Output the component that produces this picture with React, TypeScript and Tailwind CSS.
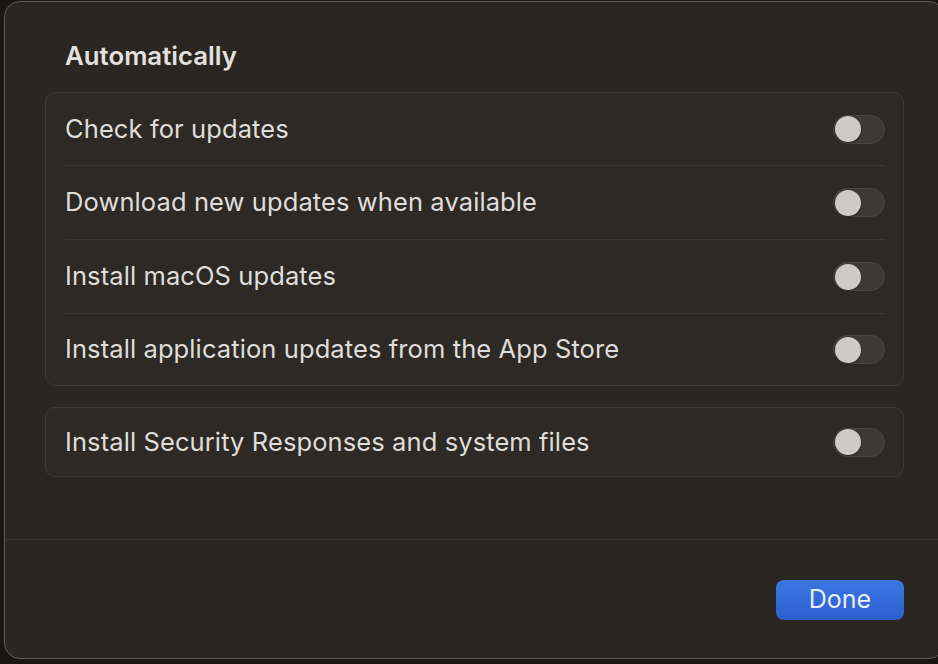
import React from 'react';

const font = { fontFamily: 'Inter, "Noto Sans", sans-serif' };

const Toggle: React.FC = () => (
  <div className="flex h-[29px] w-[52px] shrink-0 items-center rounded-full border border-[#4b4844] bg-[#3d3a36] pl-px">
    <div className="h-[26px] w-[26px] rounded-full bg-[#cccbc9] shadow-[0_1px_2px_rgba(0,0,0,0.4)]" />
  </div>
);

const heights = ['h-[73px]', 'h-[74px]', 'h-[74px]', 'h-[71px]'];

const Row: React.FC<{ label: string; divider?: boolean; h: string }> = ({ label, divider, h }) => (
  <div className="pl-[19px] pr-[18px]">
    <div className={`flex items-center justify-between ${h} ${divider ? 'border-b border-[#3a3732]' : ''}`}>
      <span className="text-[25.5px] tracking-[0.1px] text-[#dfddda]">{label}</span>
      <Toggle />
    </div>
  </div>
);

export default function App() {
  const rows = [
    'Check for updates',
    'Download new updates when available',
    'Install macOS updates',
    'Install application updates from the App Store',
  ];

  return (
    <div className="h-[664px] w-[938px] overflow-hidden bg-[#1a1613]" style={font}>
      <div className="ml-[4px] mt-px flex h-[658px] w-[941px] flex-col rounded-[16px] border border-[#5e5b57] bg-[#2a2621]">
        <div className="flex-1 px-10 pt-[38px]">
          <h2 className="h-8 pl-5 text-[25.8px] font-semibold leading-8 text-[#e3e1de]">Automatically</h2>
          <div className="mt-[20px] rounded-[10px] border border-[#3d3a35] bg-[#2d2a25]">
            {rows.map((r, i) => (
              <Row key={r} label={r} divider={i < rows.length - 1} h={heights[i]} />
            ))}
          </div>
          <div className="mt-[21px] rounded-[10px] border border-[#3d3a35] bg-[#2d2a25]">
            <div className="pl-[19px] pr-[18px]">
              <div className="flex h-[68px] items-center justify-between">
                <span className="text-[25.5px] tracking-[0.1px] text-[#dfddda]">
                  Install Security Responses and system files
                </span>
                <Toggle />
              </div>
            </div>
          </div>
        </div>
        <div className="flex h-[119px] justify-end border-t border-[#3a3732] px-10 pt-[40px]">
          <button className="h-10 w-32 rounded-[8px] bg-gradient-to-b from-[#3d76e3] to-[#2c5fcd] text-[25px] text-[#e8eefa]">
            Done
          </button>
        </div>
      </div>
    </div>
  );
}
